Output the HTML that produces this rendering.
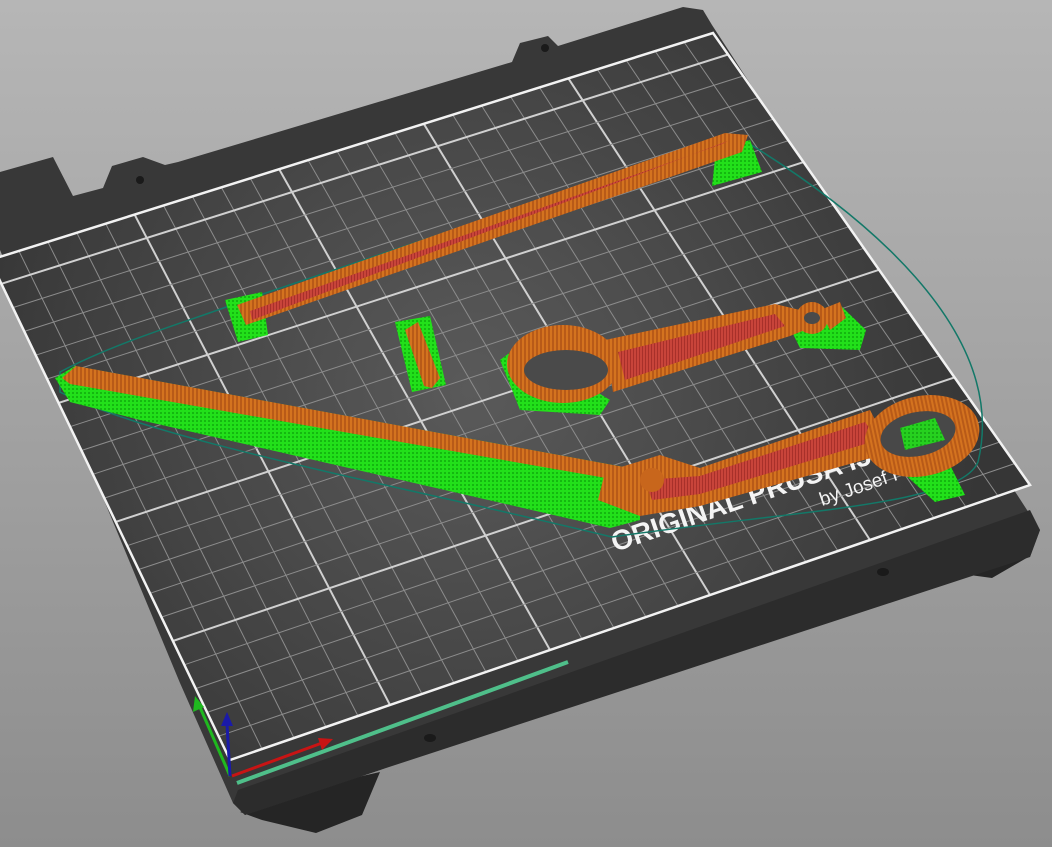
<!DOCTYPE html>
<html><head><meta charset="utf-8"><style>
html,body{margin:0;padding:0;width:1052px;height:847px;overflow:hidden;background:#a0a0a0}
svg{display:block}
</style></head><body>
<svg id="s" width="1052" height="847" viewBox="0 0 1052 847" xmlns="http://www.w3.org/2000/svg">
<defs>
<linearGradient id="bg" x1="0" y1="0" x2="0" y2="1"><stop offset="0" stop-color="#b6b6b6"/><stop offset="1" stop-color="#8d8d8d"/></linearGradient>
<radialGradient id="bed" cx="470" cy="390" r="520" gradientUnits="userSpaceOnUse"><stop offset="0" stop-color="#5a5a5a"/><stop offset="1" stop-color="#363636"/></radialGradient>
<pattern id="gr" width="4" height="4" patternUnits="userSpaceOnUse"><rect width="4" height="4" fill="#22e01a"/><rect width="2" height="2" fill="#14b810"/></pattern>
<pattern id="or" width="4" height="4" patternUnits="userSpaceOnUse"><rect width="4" height="4" fill="#d4731f"/><rect width="2" height="4" fill="#b85a18"/></pattern>
<pattern id="rd" width="3" height="3" patternUnits="userSpaceOnUse"><rect width="3" height="3" fill="#c8443a"/><rect width="1" height="3" fill="#a8302a"/></pattern>
</defs>
<rect width="1052" height="847" fill="url(#bg)"/>
<polygon points="380,772 362,815 316,833 262,820 240,812 300,790" fill="#252525"/>
<polygon points="1030,556 992,578 955,573 936,566 980,548" fill="#252525"/>
<polygon points="0,172 53,157 73,196 103,188 112,166 143,157 165,165 178,162 512,62 520,43 548,36 558,46 683,7 703,10 712,25 1040,530 1030,557 940,567 380,770 245,815 233,803 180,683 0,250" fill="#383838"/>
<polygon points="1040,530 1030,557 380,770 245,815 233,803 238,790 1030,510" fill="#2c2c2c"/>
<circle cx="545" cy="48" r="4" fill="#1a1a1a"/>
<circle cx="140" cy="180" r="4" fill="#1a1a1a"/>
<ellipse cx="430" cy="738" rx="6" ry="4" fill="#1a1a1a"/>
<ellipse cx="883" cy="572" rx="6" ry="4" fill="#1a1a1a"/>
<polygon points="-10,260 713,33 1030,485 230,760" fill="url(#bed)"/>
<g id="grid"></g>
<polygon points="-10,260 713,33 1030,485 230,760" fill="none" stroke="#f2f2f2" stroke-width="2.5"/>
<g fill="#f4f4f4" font-family="Liberation Sans, sans-serif" font-weight="bold">
<text x="615" y="552" font-size="28" transform="rotate(-19 615 552)">ORIGINAL PRUSA i3 MK3</text>
<text x="822" y="506" font-size="19" font-weight="normal" transform="rotate(-19 822 506)">by Josef Prusa</text>
</g>
<path d="M60,372 C120,340 200,318 245,300 L735,135 C860,210 1010,330 978,462 C960,505 800,510 612,537 C420,490 150,440 60,392 Z" fill="none" stroke="#137868" stroke-width="1.5"/>
<polygon points="55,378 75,366 640,470 640,520 610,528 140,420 70,402" fill="url(#gr)"/>
<polygon points="860,425 945,455 965,495 935,502 900,470" fill="url(#gr)"/>
<polygon points="225,300 262,292 268,335 238,342" fill="url(#gr)"/>
<polygon points="716,150 750,140 762,172 712,186" fill="url(#gr)"/>
<polygon points="395,322 430,316 446,385 412,392" fill="url(#gr)"/>
<polygon points="500,360 520,345 610,400 600,415 520,410" fill="url(#gr)"/>
<polygon points="785,318 840,305 866,330 860,350 800,348" fill="url(#gr)"/>
<polygon points="237,305 725,133 748,135 742,152 246,325" fill="url(#or)"/>
<polygon points="250,311 722,144 728,141 252,320" fill="url(#rd)"/>
<polygon points="405,330 418,322 440,378 432,388 424,386" fill="url(#or)"/>
<ellipse cx="563" cy="364" rx="56" ry="39" fill="url(#or)"/>
<polygon points="605,340 775,304 800,310 805,330 790,336 613,392" fill="url(#or)"/>
<polygon points="618,352 775,314 785,326 625,380" fill="url(#rd)"/>
<circle cx="812" cy="318" r="16" fill="url(#or)"/>
<polygon points="820,310 840,302 846,318 830,330" fill="url(#or)"/>
<ellipse cx="566" cy="370" rx="42" ry="20" fill="#4a4a4a"/>
<ellipse cx="812" cy="318" rx="8" ry="6" fill="#4a4a4a"/>
<polygon points="62,378 76,366 640,470 640,484 70,384" fill="url(#or)"/>
<polygon points="605,472 660,455 700,468 870,410 892,452 700,506 640,516 598,500" fill="url(#or)"/>
<polygon points="645,480 700,476 865,422 878,440 700,494 652,500" fill="url(#rd)"/>
<ellipse cx="922" cy="436" rx="58" ry="40" transform="rotate(-12 922 436)" fill="url(#or)"/>
<ellipse cx="918" cy="434" rx="38" ry="22" transform="rotate(-12 918 434)" fill="#484848"/>
<polygon points="900,428 935,418 945,440 905,450" fill="url(#gr)" opacity="0.9"/>
<circle cx="652" cy="480" r="12" fill="#c8661c"/>
<line x1="237" y1="783" x2="568" y2="662" stroke="#4fbf8a" stroke-width="4"/>
<line x1="232" y1="776" x2="322" y2="743" stroke="#c81414" stroke-width="3"/>
<polygon points="318,738 333,739 322,750" fill="#c81414"/>
<line x1="230" y1="776" x2="199" y2="705" stroke="#1fb81f" stroke-width="3"/>
<polygon points="195,696 193,712 204,707" fill="#1fb81f"/>
<line x1="230" y1="776" x2="227" y2="724" stroke="#1a1aa8" stroke-width="3"/>
<polygon points="227,712 221,726 233,726" fill="#1a1aa8"/>
</svg>
<script>
(function(){
var TL=[-10,260],TR=[713,33],BL=[230,760],BR=[1030,485];
function P(u,v){return[TL[0]*(1-u)*(1-v)+TR[0]*u*(1-v)+BL[0]*(1-u)*v+BR[0]*u*v,TL[1]*(1-u)*(1-v)+TR[1]*u*(1-v)+BL[1]*(1-u)*v+BR[1]*u*v];}
var g=document.getElementById('grid'),h='';
function L(a,b,maj){h+='<line x1="'+a[0].toFixed(1)+'" y1="'+a[1].toFixed(1)+'" x2="'+b[0].toFixed(1)+'" y2="'+b[1].toFixed(1)+'" stroke="'+(maj?'#d0d0d0':'#8c8c8c')+'" stroke-width="'+(maj?2:1)+'"/>';}
for(var i=1;i<25;i++){var u=i/25;L(P(u,0),P(u,1),i%5==0);}
for(var j=1;j<21;j++){var v=j/21;L(P(0,v),P(1,v),j%5==1);}
g.innerHTML=h;
})();
</script>
</body></html>
